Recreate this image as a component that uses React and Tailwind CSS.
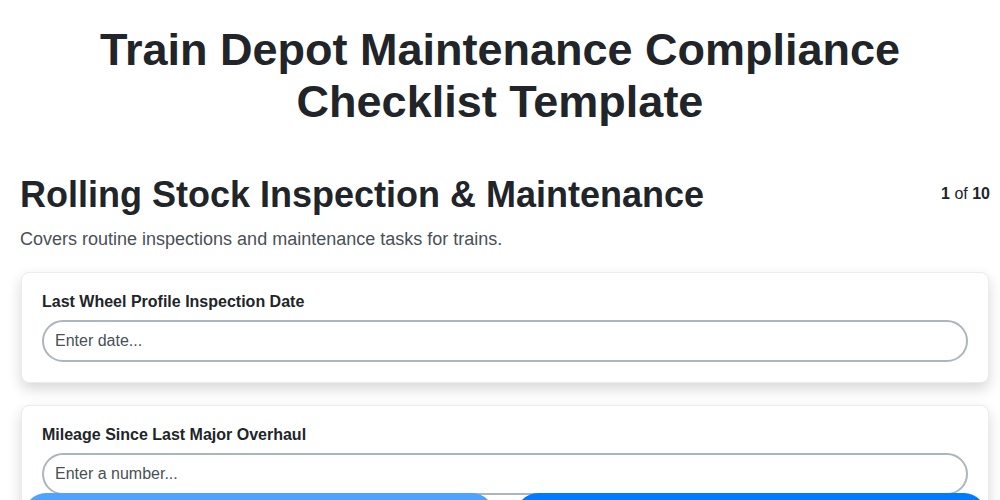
import { useState } from "react";

const fields = [
  { id: "wheel", label: "Last Wheel Profile Inspection Date", placeholder: "Enter date...", type: "text" },
  { id: "mileage", label: "Mileage Since Last Major Overhaul", placeholder: "Enter a number...", type: "text" },
];

const App = () => {
  const [values, setValues] = useState({});

  return (
    <div className="min-h-screen bg-white text-[#212529] font-['Liberation_Sans',Arial,sans-serif]">
      <h1 className="px-5 pt-6 text-center text-[45px] font-bold leading-[1.15] mb-[45px]">
        Train Depot Maintenance Compliance
        <br />
        Checklist Template
      </h1>

      <div className="pl-5 pr-[10px] pb-24">
        {/* Section header */}
        <div className="flex items-center justify-between">
          <h2 className="text-[36px] font-bold leading-[1.2]">
            Rolling Stock Inspection &amp; Maintenance
          </h2>
          <div className="text-base leading-6">
            <span className="font-bold">1</span> of <span className="font-bold">10</span>
          </div>
        </div>
        <p className="mt-[10px] text-[18px] leading-[27px] text-[#495057]">
          Covers routine inspections and maintenance tasks for trains.
        </p>

        {/* Questions */}
        <div className="mt-[19px] mx-px flex flex-col gap-[22px]">
          {fields.map((f) => (
            <div
              key={f.id}
              className="bg-white border border-[#ebebf0] rounded-lg pl-5 pr-5 pt-[21px] pb-5 shadow-[0_6px_14px_rgba(0,0,0,0.16)]"
            >
              <label htmlFor={f.id} className="block text-base font-bold leading-4 mb-[10px]">
                {f.label}
              </label>
              <input
                id={f.id}
                type={f.type}
                placeholder={f.placeholder}
                value={values[f.id] || ""}
                onChange={(e) => setValues({ ...values, [f.id]: e.target.value })}
                className="block w-full h-[42px] rounded-full border-2 border-[#adb5bd] px-[11px] text-base text-[#212529] placeholder:text-[#495057] outline-none"
              />
            </div>
          ))}
        </div>
      </div>

      {/* Navigation buttons */}
      <div className="fixed inset-x-0 bottom-[-41px] flex gap-[22px] pl-6 pr-[14px]">
        <button className="flex-1 h-12 rounded-[22px] bg-[#4da3ff] text-white text-base font-bold">
          Previous
        </button>
        <button className="flex-1 h-12 rounded-[22px] bg-[#007bff] text-white text-base font-bold">
          Next
        </button>
      </div>
    </div>
  );
};

export default App;
